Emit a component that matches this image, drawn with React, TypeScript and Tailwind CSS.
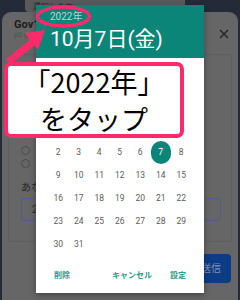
import React from 'react';

const jp = "font-['Roboto','Noto_Sans_CJK_JP',sans-serif]";

// October 2022 starts on a Saturday
const days: (number | null)[] = [null, null, null, null, null, null, ...Array.from({ length: 31 }, (_, i) => i + 1)];

function Background() {
  return (
    <div className="flex h-full flex-col">
      {/* top strip behind the sheet */}
      <div className="flex h-[12px] shrink-0">
        <div className="ml-[25px] flex w-[160px] items-center rounded-b-[4px] bg-[#5a5a5b] pl-[8px] text-[8px] leading-none text-[#232323]">
          選択します
        </div>
      </div>

      {/* bottom sheet, dimmed */}
      <div className="mx-[2px] flex flex-1 flex-col rounded-t-[9px] bg-[#666666]">
        <div className="flex items-start justify-between pl-[12px] pr-[8px] pt-[6px]">
          <div className="flex flex-col">
            <span className={`${jp} text-[11px] font-bold leading-[13px] text-[#1c1c1c]`}>Gov1</span>
            <span className={`${jp} text-[7px] leading-[9px] text-[#4e4e4e]`}>p2.gov1.jp</span>
          </div>
          <svg width="12" height="12" viewBox="0 0 12 12" className="mt-[10px]">
            <path d="M2 2L10 10M10 2L2 10" stroke="#222" strokeWidth="1.4" />
          </svg>
        </div>

        <div className="mx-[6px] mt-[14px] flex h-[188px] flex-col rounded-[4px] border border-[#5d5d5d] pl-[12px] pr-[10px] pt-[91px]">
          <div className="flex h-[9px] items-center">
            <span className="h-[9px] w-[9px] rounded-full border border-[#4a4a4a]" />
          </div>
          <div className="mt-[4px] flex h-[9px] items-center">
            <span className="h-[9px] w-[9px] rounded-full border border-[#4a4a4a]" />
          </div>
          <div className={`${jp} mt-[14px] text-[10px] leading-[12px] text-[#262626]`}>あなたの生年月日</div>
          <div className={`${jp} mt-[4px] flex h-[23px] items-center rounded-[3px] border-[1.5px] border-[#4c5f82] pl-[10px] text-[10px] text-[#2a2a2a]`}>
            2022/10/07
          </div>
        </div>

        <div className="mr-[7px] mt-[12px] flex h-[29px] w-[40px] items-center justify-center self-end rounded-[4px] bg-[#0b3c85]">
          <span className={`${jp} text-[10px] text-[#8492ad]`}>送信</span>
        </div>
      </div>
    </div>
  );
}

function DatePicker() {
  return (
    <div className="absolute left-[36px] top-[5px] flex h-[288px] w-[168px] flex-col bg-white shadow-[0_2px_6px_rgba(0,0,0,0.35)]">
      <div className="flex h-[53px] flex-col bg-[#0b8578] pl-[14px]">
        <span className={`${jp} mt-[6px] text-[10px] leading-[12px] text-white/70`}>2022年</span>
        <span className={`${jp} mt-[4px] text-[21px] leading-[25px] text-white`}>10月7日(金)</span>
      </div>

      {/* month title and weekday row sit under the callout; only the day grid shows */}
      <div className="flex flex-col pl-[12px] pt-[59.5px]">
        <div className="grid w-[143.5px] grid-cols-7">
          {days.map((d, i) => (
            <div key={i} className="flex h-[23px] items-center justify-center">
              {d === 7 ? (
                <span className="flex h-[23px] w-[23px] items-center justify-center rounded-full bg-[#0b8578] font-['Roboto'] text-[8.5px] text-white">
                  7
                </span>
              ) : d ? (
                <span className="font-['Roboto'] text-[8.5px] text-[#5c5c5c]">{d}</span>
              ) : null}
            </div>
          ))}
        </div>
      </div>

      <div className={`${jp} mt-auto flex h-[37px] items-center px-[18px] pt-[2px] text-[8px] font-bold text-[#2f9a8d]`}>
        <span>削除</span>
        <span className="ml-auto">キャンセル</span>
        <span className="ml-[18px]">設定</span>
      </div>
    </div>
  );
}

function Annotation() {
  return (
    <>
      <svg className="pointer-events-none absolute left-0 top-0" width="240" height="300" viewBox="0 0 240 300">
        <ellipse cx="63.5" cy="16.5" rx="26" ry="9.5" fill="none" stroke="#ff2a6a" strokeWidth="3.5" />
        <path d="M8 62L33 42" stroke="#ff2a6a" strokeWidth="7" />
        <path d="M45 30L25 33L38 50Z" fill="#ff2a6a" />
      </svg>
      <div className="absolute left-[4px] top-[62px] flex h-[76px] w-[180px] flex-col items-center justify-center rounded-[7px] border-[4px] border-[#ff2a6a] bg-white">
        <span className="font-['Noto_Sans_CJK_JP',sans-serif] text-[27px] leading-[37px] text-black">「2022年」</span>
        <span className="font-['Noto_Sans_CJK_JP',sans-serif] text-[27px] leading-[37px] text-black">をタップ</span>
      </div>
    </>
  );
}

export default function App() {
  return (
    <div className="relative h-[300px] w-[240px] overflow-hidden bg-[#242a38]">
      <Background />
      <DatePicker />
      <Annotation />
    </div>
  );
}
